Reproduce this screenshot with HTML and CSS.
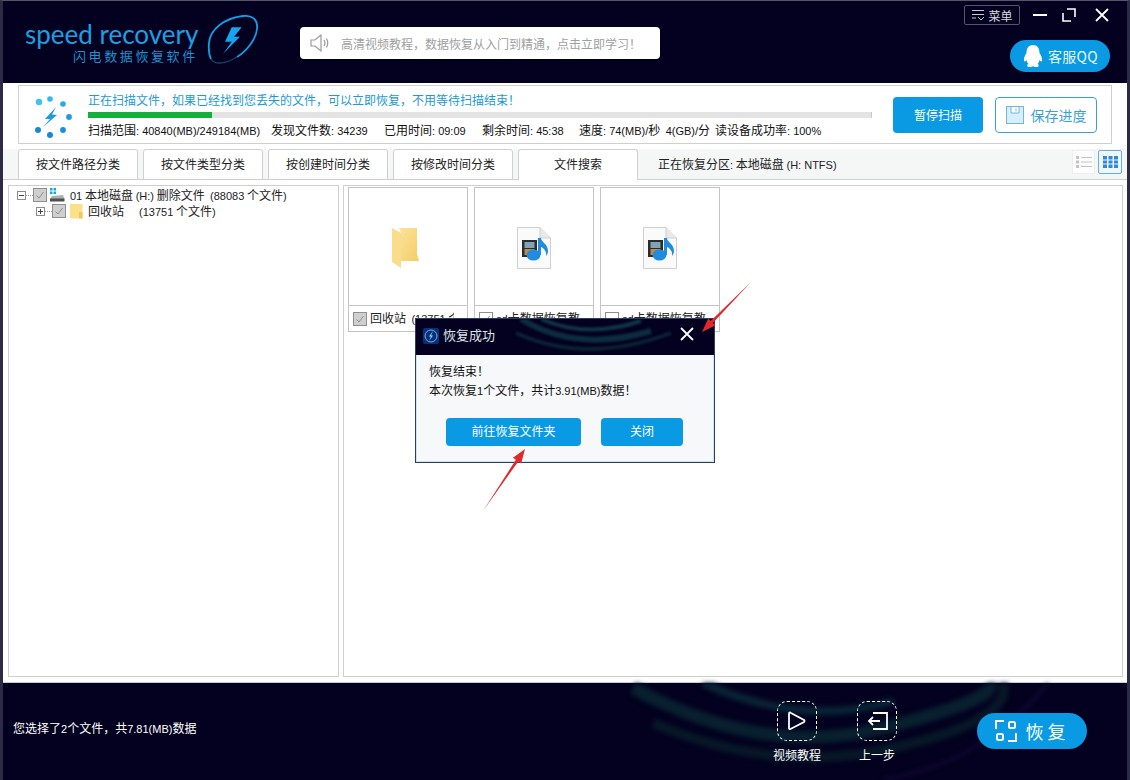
FILE: index.html
```html
<!DOCTYPE html>
<html lang="zh-CN">
<head>
    <meta charset="UTF-8">
    <title>闪电数据恢复软件</title>
    <link rel="stylesheet" href="styles.css">
</head>
<body>
<div class="window">
    <!-- Top bar -->
    <header class="topbar">
        <div class="logo">
            <div class="logo-text">
                <div class="logo-name">speed recovery</div>
                <div class="logo-sub">闪电数据恢复软件</div>
            </div>
            <svg class="logo-mark" width="52" height="52" viewBox="0 0 52 52">
                <path d="M4 44C2 40 1.500 34 2 28C3 14 18 3 36 1C46 0 51 5 50 14C49 24 40 36 30 42" fill="none" stroke="#0f9fe6" stroke-width="1.800"/>
                <path d="M4 44C8 51 20 48 30 42" fill="none" stroke="#124566" stroke-width="1.400"/>
                <path d="M34.700 12.300H24.700L18 26.700H24.700L15.700 39.300L33 21.700H27Z" fill="#15a5ee"/>
            </svg>
        </div>
        <div class="notice">
            <svg width="20" height="18" viewBox="0 0 20 18">
                <path d="M1 6H5L11 1V17L5 12H1Z" fill="none" stroke="#9a9a9a" stroke-width="1.2"/>
                <path d="M14 6Q16 9 14 12M16.500 4.500Q19 9 16.500 13.500" fill="none" stroke="#9a9a9a" stroke-width="1.2"/>
            </svg>
            <span>高清视频教程，数据恢复从入门到精通，点击立即学习！</span>
        </div>
        <div class="top-right">
            <div class="win-controls">
                <div class="menu-btn">
                    <svg width="14" height="12" viewBox="0 0 14 12">
                        <path d="M1 1.500H13M1 5.500H13M1 9H5M7 8L10 11L13 8" fill="none" stroke="#c9cbd3" stroke-width="1"/>
                    </svg>
                    <span>菜单</span>
                </div>
                <svg class="win-min" width="14" height="14" viewBox="0 0 14 14"><path d="M0 7H14" stroke="#fff" stroke-width="2"/></svg>
                <svg class="win-max" width="14" height="14" viewBox="0 0 14 14"><path d="M5 1H13V9M9 13H1V5" fill="none" stroke="#fff" stroke-width="1.6"/></svg>
                <svg class="win-close" width="14" height="14" viewBox="0 0 14 14"><path d="M1 1L13 13M13 1L1 13" stroke="#fff" stroke-width="1.800"/></svg>
            </div>
            <div class="qq-btn">
                <svg width="20" height="24" viewBox="0 0 20 24">
                    <path d="M10 1C15 1 16.500 5 16.500 9C18 11 19.500 14 19 17C18 18 17 17 16.500 16C16 18 15.500 19 14.500 20C16 20.500 16.500 22.500 14 23C12 23.300 11 22.500 10 22.300C9 22.500 8 23.300 6 23C3.500 22.500 4 20.500 5.500 20C4.500 19 4 18 3.500 16C3 17 2 18 1 17C.5 14 2 11 3.500 9C3.500 5 5 1 10 1Z" fill="#fff"/>
                </svg>
                <span>客服QQ</span>
            </div>
        </div>
    </header>

    <main class="content">
        <!-- Scan progress -->
        <section class="scan-panel">
            <svg class="spinner" width="40" height="44" viewBox="0 0 40 44">
                <circle cx="6" cy="7" r="3.200" fill="#3cc3ef"/>
                <circle cx="17" cy="4" r="2.800" fill="#35b9ec"/>
                <circle cx="30" cy="9" r="2.800" fill="#2aa8e6"/>
                <circle cx="36" cy="22" r="2.900" fill="#219be0"/>
                <circle cx="30" cy="35" r="2.900" fill="#1c8fdb"/>
                <circle cx="17" cy="40" r="3" fill="#1788d6"/>
                <circle cx="5" cy="35" r="3" fill="#1788d6"/>
                <path d="M23 12L12 24L17 24L10 32L24 20L19 19.500Z" fill="#1b9be3"/>
            </svg>
            <div class="scan-info">
                <div class="scan-msg">正在扫描文件，如果已经找到您丢失的文件，可以立即恢复，不用等待扫描结束！</div>
                <div class="bar"><div class="bar-fill"></div></div>
                <div class="scan-stats">
                    <span class="stat-range">扫描范围<b class="num">: 40840(MB)/249184(MB)</b></span>
                    <span class="stat-found">发现文件数<b class="num">: 34239</b></span>
                    <span class="stat-used">已用时间<b class="num">: 09:09</b></span>
                    <span class="stat-left">剩余时间<b class="num">: 45:38</b></span>
                    <span class="stat-speed">速度<b class="num">: 74(MB)/</b>秒&nbsp; <b class="num">4(GB)/</b>分</span>
                    <span>读设备成功率<b class="num">: 100%</b></span>
                </div>
            </div>
            <button class="btn-pause">暂停扫描</button>
            <button class="btn-save">
                <svg width="18" height="18" viewBox="0 0 18 18">
                    <rect x=".5" y=".5" width="17" height="17" fill="#d8effb" stroke="#6fb6e2"/>
                    <path d="M5 1V7H13V1" fill="#fff" stroke="#6fb6e2"/>
                    <path d="M10 2.500V5.500" stroke="#6fb6e2"/>
                </svg>
                <span>保存进度</span>
            </button>
        </section>

        <!-- Tabs -->
        <nav class="tabs">
            <div class="tab">按文件路径分类</div>
            <div class="tab">按文件类型分类</div>
            <div class="tab">按创建时间分类</div>
            <div class="tab">按修改时间分类</div>
            <div class="tab tab-active">文件搜索</div>
            <div class="partition">正在恢复分区<b class="num">:</b> 本地磁盘 <b class="num">(H: NTFS)</b></div>
            <div class="view-btns">
                <div class="view-btn view-list">
                    <svg width="16" height="12" viewBox="0 0 16 12">
                        <path d="M0 1.500H3M0 6H3M0 10.500H3" stroke="#c4c4c4" stroke-width="3"/>
                        <path d="M5 1.500H16M5 6H16M5 10.500H16" stroke="#c4c4c4"/>
                    </svg>
                </div>
                <div class="view-btn view-on">
                    <svg width="15" height="12" viewBox="0 0 15 12">
                        <path d="M0 0H4V3.500H0ZM5.500 0H9.500V3.500H5.500ZM11 0H15V3.500H11ZM0 4.500H4V7.500H0ZM5.500 4.500H9.500V7.500H5.500ZM11 4.500H15V7.500H11ZM0 8.500H4V12H0ZM5.500 8.500H9.500V12H5.500ZM11 8.500H15V12H11Z" fill="#2f88d8"/>
                    </svg>
                </div>
            </div>
        </nav>

        <div class="panes">
            <!-- Tree -->
            <aside class="tree">
                <div class="tree-row">
                    <span class="expander"><i class="minus"></i></span>
                    <span class="dots"></span>
                    <span class="check checked"><svg width="12" height="12" viewBox="0 0 12 12"><path d="M2.500 6.500L5 9L9.500 3" fill="none" stroke="#8f8f8f"/></svg></span>
                    <svg class="drive" width="16" height="16" viewBox="0 0 16 16">
                        <path d="M1 1H3.500V3.500H1ZM4.500 1H7V3.500H4.500ZM1 4.500H3.500V7H1ZM4.500 4.500H7V7H4.500Z" fill="#19a5d8"/>
                        <path d="M3 9L14 8L15.500 12H1Z" fill="#aab0b3"/>
                        <rect x="1" y="11.500" width="14.500" height="3" fill="#4a4f52"/>
                    </svg>
                    <span class="tree-label"><b class="num">01</b> 本地磁盘 <b class="num">(H:)</b> 删除文件&nbsp; <b class="num">(88083</b> 个文件<b class="num">)</b></span>
                </div>
                <div class="tree-row tree-child">
                    <span class="expander"><i class="minus"></i><i class="plus"></i></span>
                    <span class="dots"></span>
                    <span class="check checked"><svg width="12" height="12" viewBox="0 0 12 12"><path d="M2.500 6.500L5 9L9.500 3" fill="none" stroke="#8f8f8f"/></svg></span>
                    <svg class="small-folder" width="13" height="16" viewBox="0 0 13 16">
                        <path d="M0 1H12.500V15.500H0Z" fill="#fde08a"/>
                        <path d="M9 9H12.500V15.500H9Z" fill="#f3c65e"/>
                    </svg>
                    <span class="tree-name">回收站</span>
                    <span class="tree-count"><b class="num">(13751</b> 个文件<b class="num">)</b></span>
                </div>
            </aside>

            <!-- Thumbnails -->
            <section class="grid">
                <div class="card">
                    <div class="thumb">
                        <svg class="folder-big" width="28" height="42" viewBox="0 0 28 42">
                            <defs>
                                <linearGradient id="fold" x1="0" y1="0" x2="1" y2="1">
                                    <stop offset="0" stop-color="#fbe39a"/>
                                    <stop offset="1" stop-color="#f5cc68"/>
                                </linearGradient>
                            </defs>
                            <path d="M7 2H25V28L27 35H9V7Z" fill="url(#fold)"/>
                            <path d="M0 2L9 7V42L0 36Z" fill="#f9dc8c"/>
                        </svg>
                    </div>
                    <div class="card-label">
                        <span class="check checked"><svg width="12" height="12" viewBox="0 0 12 12"><path d="M2.500 6.500L5 9L9.500 3" fill="none" stroke="#8f8f8f"/></svg></span>
                        <span class="card-name">回收站&nbsp; <b class="num">(13751</b> 个文件<b class="num">)</b></span>
                    </div>
                </div>
                <div class="card">
                    <div class="thumb">
                        <svg class="media-file" width="34" height="42" viewBox="0 0 34 42">
                            <path d="M.5 .5H23L33.500 11V41.500H.5Z" fill="#fafafa" stroke="#cfcfcf"/>
                            <path d="M23 .5V11H33.500" fill="#e9e9e9" stroke="#cfcfcf"/>
                            <rect x="5" y="13" width="15" height="17" fill="#2a2d30"/>
                            <rect x="7.500" y="15" width="10" height="6" fill="#7fa4b8"/>
                            <rect x="7.500" y="22" width="10" height="6" fill="#c08a4c"/>
                            <path d="M21 11H24C24 15 31 17 31 24C31 26 30 28 29 29C30 25 27 21 24 20V28H21Z" fill="#1f8ce0"/>
                            <ellipse cx="16.500" cy="28" rx="7" ry="5.500" fill="#1f8ce0"/>
                        </svg>
                    </div>
                    <div class="card-label">
                        <span class="check"><svg width="12" height="12" viewBox="0 0 12 12"><path d="M2.500 6.500L5 9L9.500 3" fill="none" stroke="#8f8f8f"/></svg></span>
                        <span class="card-name"><b class="num">sd</b>卡数据恢复教程.mp4</span>
                    </div>
                </div>
                <div class="card">
                    <div class="thumb">
                        <svg class="media-file" width="34" height="42" viewBox="0 0 34 42">
                            <path d="M.5 .5H23L33.500 11V41.500H.5Z" fill="#fafafa" stroke="#cfcfcf"/>
                            <path d="M23 .5V11H33.500" fill="#e9e9e9" stroke="#cfcfcf"/>
                            <rect x="5" y="13" width="15" height="17" fill="#2a2d30"/>
                            <rect x="7.500" y="15" width="10" height="6" fill="#7fa4b8"/>
                            <rect x="7.500" y="22" width="10" height="6" fill="#c08a4c"/>
                            <path d="M21 11H24C24 15 31 17 31 24C31 26 30 28 29 29C30 25 27 21 24 20V28H21Z" fill="#1f8ce0"/>
                            <ellipse cx="16.500" cy="28" rx="7" ry="5.500" fill="#1f8ce0"/>
                        </svg>
                    </div>
                    <div class="card-label">
                        <span class="check"></span>
                        <span class="card-name"><b class="num">sd</b>卡数据恢复教程.mp4</span>
                    </div>
                </div>
            </section>
        </div>
    </main>

    <!-- Bottom bar -->
    <footer class="bottombar">
        <svg class="arcs" width="1124" height="97" viewBox="0 0 1124 97">
            <path d="M630 5Q760 75 880 45T985 0" fill="none" stroke="#08202f" stroke-width="13"/>
            <path d="M650 40Q770 92 890 65T1000 0" fill="none" stroke="#071828" stroke-width="10"/>
            <path d="M700 0Q800 45 890 18" fill="none" stroke="#0a2436" stroke-width="8"/>
            <path d="M880 97Q980 80 1045 0" fill="none" stroke="#1a0f40" stroke-width="2"/>
        </svg>
        <div class="selected">您选择了<b class="num">2</b>个文件，共<b class="num">7.81(MB)</b>数据</div>
        <div class="tool tool-video">
            <div class="tool-icon">
                <svg width="18" height="20" viewBox="0 0 18 20"><path d="M2 1.500Q1 1.500 1 3V17Q1 18.500 2.500 18L16 11Q17 10 16 9L2.500 1.800Z" fill="none" stroke="#fff" stroke-width="1.800"/></svg>
            </div>
            <span>视频教程</span>
        </div>
        <div class="tool tool-back">
            <div class="tool-icon">
                <svg width="21" height="18" viewBox="0 0 21 18"><path d="M6 1H20V17H6M13 9H2M6 5L2 9L6 13" fill="none" stroke="#fff" stroke-width="1.800"/></svg>
            </div>
            <span>上一步</span>
        </div>
        <div class="restore-btn">
            <svg width="22" height="22" viewBox="0 0 22 22">
                <path d="M1 9V1H9M13 21H21V13" fill="none" stroke="#fff" stroke-width="2"/>
                <rect x="14" y="2" width="6" height="6" rx="1.500" fill="none" stroke="#fff" stroke-width="2"/>
                <rect x="2" y="14" width="6" height="6" rx="1.500" fill="none" stroke="#fff" stroke-width="2"/>
            </svg>
            <span>恢 复</span>
        </div>
    </footer>

    <!-- Success dialog -->
    <div class="dialog">
        <div class="dialog-title">
            <svg class="dialog-arcs" width="298" height="36" viewBox="0 0 298 36">
                <path d="M105 0Q160 34 235 12" fill="none" stroke="#0c2c40" stroke-width="6"/>
                <path d="M125 0Q170 20 225 2" fill="none" stroke="#113448" stroke-width="4"/>
                <path d="M100 14Q170 46 255 14" fill="none" stroke="#0a2236" stroke-width="4"/>
            </svg>
            <svg class="dialog-logo" width="16" height="16" viewBox="0 0 16 16">
                <rect width="16" height="16" rx="2" fill="#0a2f78"/>
                <circle cx="8" cy="8" r="6" fill="none" stroke="#5fb7ee"/>
                <path d="M10 3L6 8.500H8L6 13L10 7.500H8Z" fill="#9fd8f8"/>
            </svg>
            <span class="dialog-name">恢复成功</span>
            <svg class="dialog-close" width="14" height="14" viewBox="0 0 14 14"><path d="M1 1L13 13M13 1L1 13" stroke="#fff" stroke-width="1.800"/></svg>
        </div>
        <div class="dialog-body">
            <p>恢复结束！</p>
            <p>本次恢复<b class="num">1</b>个文件，共计<b class="num">3.91(MB)</b>数据！</p>
            <div class="dialog-btns">
                <button class="dlg-btn dlg-open">前往恢复文件夹</button>
                <button class="dlg-btn dlg-shut">关闭</button>
            </div>
        </div>
    </div>

    <!-- Red annotation arrows -->
    <svg class="arrows" width="1130" height="780" viewBox="0 0 1130 780">
        <polygon points="751,282 712.9,323 715.4,325.5 702,332 708.2,318.500 710.7,321" fill="#e2282c"/>
        <polygon points="483,511 518.3,461.4 521.2,463.4 525,449 513,457.8 515.9,459.8" fill="#e2282c"/>
    </svg>
</div>
</body>
</html>
```

FILE: styles.css
```css
* {
    box-sizing: border-box;
}
body {
    margin: 0;
    font-family: "Noto Sans CJK SC", "Liberation Sans", sans-serif;
    font-size: 12px;
    color: #222;
}
/* latin text and digits run a size smaller than the chinese */
.num {
    font-family: "Liberation Sans", sans-serif;
    font-weight: normal;
    font-size: 11px;
}
.window {
    position: relative;
    width: 1130px;
    height: 780px;
    overflow: hidden;
    background: #03011f;
    border-top: 1px solid #55566a;
    border-left: 3px solid #2b2b45;
    border-right: 3px solid #2b2b45;
    display: flex;
    flex-direction: column;
}

/* Top bar */
.topbar {
    height: 82px;
    flex: none;
    display: flex;
    padding-left: 22px;
    padding-right: 17px;
}
.logo {
    display: flex;
    width: 275px;
    padding-top: 14px;
}
.logo-text {
    width: 182px;
    padding-top: 5px;
}
.logo-name {
    font-family: Lato, sans-serif;
    font-size: 26px;
    line-height: 28px;
    color: #1aa0e0;
    white-space: nowrap;
}
.logo-sub {
    font-size: 13px;
    line-height: 16px;
    letter-spacing: 2.6px;
    color: #1c92d0;
    margin-left: 48px;
    white-space: nowrap;
}
.notice {
    margin-top: 26px;
    width: 360px;
    height: 32px;
    background: #fff;
    border-radius: 4px;
    display: flex;
    align-items: center;
    padding-left: 10px;
    gap: 11px;
    color: #a0a0a0;
}
.top-right {
    margin-left: auto;
    display: flex;
    flex-direction: column;
    align-items: flex-end;
}
.win-controls {
    display: flex;
    align-items: center;
    margin-top: 4px;
    margin-right: 1px;
    height: 20px;
}
.menu-btn {
    width: 56px;
    height: 20px;
    border: 1px solid #55566a;
    border-radius: 2px;
    display: flex;
    align-items: center;
    justify-content: center;
    gap: 3px;
    color: #d8d8de;
    margin-right: 13px;
}
.win-max {
    margin-left: 15px;
}
.win-close {
    margin-left: 19px;
}
.qq-btn {
    margin-top: 15px;
    width: 100px;
    height: 32px;
    border-radius: 16px;
    background: #0a9ae4;
    color: #e8f6ff;
    font-size: 14px;
    letter-spacing: .3px;
    display: flex;
    align-items: center;
    padding-left: 13px;
    gap: 5px;
}

/* Main area */
.content {
    flex: 1;
    background: #fff;
    display: flex;
    flex-direction: column;
    border-bottom: 1px solid #c9cdd6;
}
.scan-panel {
    margin: 2px 15px 0;
    height: 59px;
    background: #fff;
    border: 1px solid #cfcfcf;
    display: flex;
    align-items: center;
    padding-left: 14px;
    flex: none;
}
.spinner {
    flex: none;
    margin-top: 4px;
}
.scan-info {
    margin-left: 15px;
    width: 784px;
    flex: none;
    align-self: flex-start;
    margin-top: 5px;
}
.scan-msg {
    color: #1c9ad6;
    line-height: 18px;
    height: 18px;
}
.bar {
    height: 6px;
    margin-top: 3px;
    background: #e3e3e3;
    border-right: 1px solid #c8c8c8;
}
.bar-fill {
    width: 124px;
    height: 6px;
    background: #12b03b;
}
.scan-stats {
    display: flex;
    margin-top: 3px;
    white-space: nowrap;
    color: #111;
    line-height: 18px;
}
.stat-range {
    width: 183px;
}
.stat-found {
    width: 113px;
}
.stat-used {
    width: 98px;
}
.stat-left {
    width: 97px;
}
.stat-speed {
    width: 136px;
}
.btn-pause {
    margin-left: 21px;
    width: 90px;
    height: 36px;
    border: none;
    border-radius: 4px;
    background: #0a9ae4;
    color: #fff;
    font-family: inherit;
    font-size: 12px;
}
.btn-save {
    margin-left: 12px;
    width: 102px;
    height: 36px;
    border: 1px solid #3d9fd8;
    border-radius: 4px;
    background: #fff;
    color: #3d9fd8;
    font-family: inherit;
    font-size: 14px;
    display: flex;
    align-items: center;
    justify-content: center;
    gap: 7px;
    padding: 0;
}

/* Tabs */
.tabs {
    background: #f5f7f7;
    margin-top: 5px;
    padding: 0 5px 0 15px;
    height: 31px;
    flex: none;
    display: flex;
    gap: 5px;
    border-bottom: 1px solid #cfcfcf;
}
.tab {
    width: 120px;
    height: 31px;
    background: #fff;
    border: 1px solid #cfcfcf;
    border-radius: 3px 3px 0 0;
    text-align: center;
    line-height: 28px;
}
.tab-active {
    border-bottom: none;
}
.partition {
    margin-left: 15px;
    line-height: 29px;
}
.view-btns {
    margin-left: auto;
    margin-top: 1px;
    display: flex;
    gap: 3px;
    align-items: flex-start;
}
.view-btn {
    width: 24px;
    height: 24px;
    background: #fdfdfd;
    border: 1px solid #eee;
    display: flex;
    align-items: center;
    justify-content: center;
}
.view-list {
    width: 23px;
}
.view-on {
    background: #eef7fd;
    border: 1px solid #66aee0;
    border-radius: 2px;
}

/* Tree and thumbnails */
.panes {
    flex: 1;
    display: flex;
    gap: 4px;
    padding: 5px 4px 5px 5px;
}
.tree {
    width: 331px;
    border: 1px solid #cfcfcf;
}
.tree-row {
    display: flex;
    align-items: center;
    height: 16px;
    padding-left: 8px;
    margin-top: 1px;
    white-space: nowrap;
}
.tree-child {
    margin-top: 0;
    padding-left: 27px;
}
.expander {
    position: relative;
    width: 9px;
    height: 9px;
    border: 1px solid #8c8c8c;
    flex: none;
}
.minus {
    position: absolute;
    left: 1px;
    top: 3px;
    width: 5px;
    height: 1px;
    background: #444;
}
.plus {
    position: absolute;
    left: 3px;
    top: 1px;
    width: 1px;
    height: 5px;
    background: #444;
}
.dots {
    width: 7px;
    border-top: 1px dotted #999;
    flex: none;
}
.check {
    width: 14px;
    height: 14px;
    border: 1px solid #8f8f8f;
    background: #fff;
    flex: none;
    display: flex;
}
.checked {
    background: #cfcfcf;
}
.drive {
    margin-left: 2px;
    flex: none;
}
.tree-label {
    margin-left: 5px;
    margin-bottom: 2px;
}
.small-folder {
    margin-left: 4px;
    flex: none;
}
.tree-name {
    margin-left: 5px;
    margin-bottom: 2px;
    width: 51px;
}
.tree-count {
    margin-bottom: 2px;
}
.grid {
    flex: 1;
    background: #fff;
    border: 1px solid #cfcfcf;
    display: flex;
    gap: 6px;
    align-items: flex-start;
    padding: 1px 4px;
}
.card {
    width: 120px;
    height: 145px;
    border: 1px solid #c4c4c4;
}
.thumb {
    height: 118px;
    border-bottom: 1px solid #c4c4c4;
    display: flex;
    align-items: center;
    justify-content: center;
}
.folder-big {
    margin-right: 4px;
}
.media-file {
    margin-top: 2px;
}
.card-label {
    display: flex;
    align-items: flex-start;
    gap: 3px;
    padding: 4px 0 0 4px;
    white-space: nowrap;
}
.card-label .check {
    margin-top: 2px;
}
.card-name {
    width: 84px;
    height: 16px;
    line-height: 16px;
    overflow: hidden;
}

/* Bottom bar */
.bottombar {
    position: relative;
    height: 97px;
    flex: none;
    display: flex;
    color: #fff;
}
.arcs {
    position: absolute;
    left: 0;
    top: 0;
    filter: blur(2.5px);
}
.selected {
    position: relative;
    margin: 36px 0 0 10px;
    width: 764px;
    line-height: 18px;
}
.tool {
    position: relative;
    width: 40px;
    margin-top: 18px;
    display: flex;
    flex-direction: column;
    align-items: center;
    white-space: nowrap;
    line-height: 18px;
}
.tool-back {
    margin-left: 40px;
}
.tool-icon {
    width: 40px;
    height: 40px;
    border: 1px dashed #fff;
    border-radius: 10px;
    display: flex;
    align-items: center;
    justify-content: center;
    margin-bottom: 5px;
}
.restore-btn {
    position: relative;
    margin: 30px 0 0 80px;
    width: 110px;
    height: 36px;
    border-radius: 18px;
    background: #0a9ae4;
    display: flex;
    align-items: center;
    justify-content: center;
    gap: 8px;
    font-size: 18px;
    padding-right: 3px;
}

/* Dialog */
.dialog {
    position: absolute;
    left: 412px;
    top: 317px;
    width: 300px;
    height: 145px;
    border: 1px solid #2b3f63;
    background: #f7f8f9;
}
.dialog-title {
    position: relative;
    height: 36px;
    background: #03011f;
    display: flex;
    align-items: center;
    padding: 0 0 2px 7px;
    color: #dde3ea;
}
.dialog-arcs {
    position: absolute;
    left: 0;
    top: 0;
    filter: blur(1px);
}
.dialog-logo {
    position: relative;
}
.dialog-name {
    position: relative;
    margin-left: 4px;
    margin-bottom: 4px;
    font-size: 13px;
}
.dialog-close {
    position: relative;
    margin-left: auto;
    margin-right: 20px;
    margin-bottom: 4px;
}
.dialog-body {
    padding: 6px 12px 0;
    border: 1px solid #cfe4f3;
    border-top: none;
    height: 107px;
    color: #111;
}
.dialog-body p {
    margin: 0;
    line-height: 19px;
}
.dialog-btns {
    display: flex;
    gap: 20px;
    margin: 17px 0 0 17px;
}
.dlg-btn {
    height: 28px;
    border: none;
    border-radius: 4px;
    background: #0a9ae4;
    color: #fff;
    font-family: inherit;
    font-size: 12px;
    padding: 0 0 3px;
}
.dlg-open {
    width: 135px;
}
.dlg-shut {
    width: 82px;
}

/* Annotation overlay */
.arrows {
    position: absolute;
    left: -3px;
    top: -1px;
}
```
